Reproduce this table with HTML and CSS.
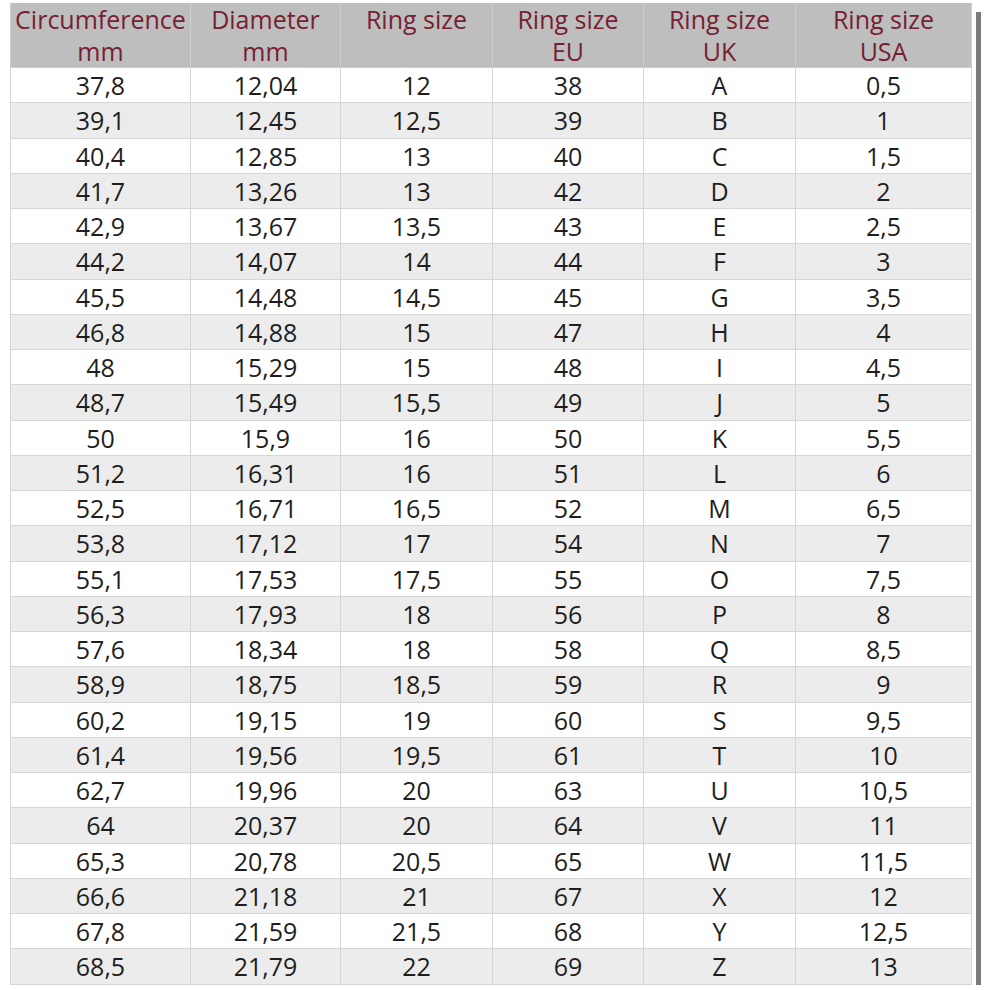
FILE: index.html
```html
<!DOCTYPE html>
<html>
<head>
<meta charset="utf-8">
<link rel="stylesheet" href="styles.css">
</head>
<body>
<div class="wrap">
<table class="sizes">
<colgroup>
<col class="c1"><col class="c2"><col class="c3"><col class="c4"><col class="c5"><col class="c6">
</colgroup>
<thead>
<tr><th>Circumference<br>mm</th><th>Diameter<br>mm</th><th>Ring size</th><th>Ring size<br>EU</th><th>Ring size<br>UK</th><th>Ring size<br>USA</th></tr>
</thead>
<tbody>
<tr><td>37,8</td><td>12,04</td><td>12</td><td>38</td><td>A</td><td>0,5</td></tr>
<tr><td>39,1</td><td>12,45</td><td>12,5</td><td>39</td><td>B</td><td>1</td></tr>
<tr><td>40,4</td><td>12,85</td><td>13</td><td>40</td><td>C</td><td>1,5</td></tr>
<tr><td>41,7</td><td>13,26</td><td>13</td><td>42</td><td>D</td><td>2</td></tr>
<tr><td>42,9</td><td>13,67</td><td>13,5</td><td>43</td><td>E</td><td>2,5</td></tr>
<tr><td>44,2</td><td>14,07</td><td>14</td><td>44</td><td>F</td><td>3</td></tr>
<tr><td>45,5</td><td>14,48</td><td>14,5</td><td>45</td><td>G</td><td>3,5</td></tr>
<tr><td>46,8</td><td>14,88</td><td>15</td><td>47</td><td>H</td><td>4</td></tr>
<tr><td>48</td><td>15,29</td><td>15</td><td>48</td><td>I</td><td>4,5</td></tr>
<tr><td>48,7</td><td>15,49</td><td>15,5</td><td>49</td><td>J</td><td>5</td></tr>
<tr><td>50</td><td>15,9</td><td>16</td><td>50</td><td>K</td><td>5,5</td></tr>
<tr><td>51,2</td><td>16,31</td><td>16</td><td>51</td><td>L</td><td>6</td></tr>
<tr><td>52,5</td><td>16,71</td><td>16,5</td><td>52</td><td>M</td><td>6,5</td></tr>
<tr><td>53,8</td><td>17,12</td><td>17</td><td>54</td><td>N</td><td>7</td></tr>
<tr><td>55,1</td><td>17,53</td><td>17,5</td><td>55</td><td>O</td><td>7,5</td></tr>
<tr><td>56,3</td><td>17,93</td><td>18</td><td>56</td><td>P</td><td>8</td></tr>
<tr><td>57,6</td><td>18,34</td><td>18</td><td>58</td><td>Q</td><td>8,5</td></tr>
<tr><td>58,9</td><td>18,75</td><td>18,5</td><td>59</td><td>R</td><td>9</td></tr>
<tr><td>60,2</td><td>19,15</td><td>19</td><td>60</td><td>S</td><td>9,5</td></tr>
<tr><td>61,4</td><td>19,56</td><td>19,5</td><td>61</td><td>T</td><td>10</td></tr>
<tr><td>62,7</td><td>19,96</td><td>20</td><td>63</td><td>U</td><td>10,5</td></tr>
<tr><td>64</td><td>20,37</td><td>20</td><td>64</td><td>V</td><td>11</td></tr>
<tr><td>65,3</td><td>20,78</td><td>20,5</td><td>65</td><td>W</td><td>11,5</td></tr>
<tr><td>66,6</td><td>21,18</td><td>21</td><td>67</td><td>X</td><td>12</td></tr>
<tr><td>67,8</td><td>21,59</td><td>21,5</td><td>68</td><td>Y</td><td>12,5</td></tr>
<tr><td>68,5</td><td>21,79</td><td>22</td><td>69</td><td>Z</td><td>13</td></tr>
</tbody>
</table>
<div class="shadow"></div>
</div>
</body>
</html>
```
FILE: styles.css
```css
html, body {
  margin: 0;
  padding: 0;
  background: #ffffff;
}
body {
  padding: 3px 0 0 10px;
  font-family: "Open Sans", "Liberation Sans", sans-serif;
}
.wrap {
  display: flex;
  align-items: flex-start;
}
.sizes {
  border-collapse: collapse;
  table-layout: fixed;
  width: 961px;
}
.c1 { width: 180px; }
.c2 { width: 150px; }
.c3 { width: 152px; }
.c4 { width: 151px; }
.c5 { width: 152px; }
.c6 { width: 176px; }
.sizes th {
  background: #bebebe;
  color: #772032;
  font-weight: 500;
  font-size: 25px;
  line-height: 32px;
  height: 64px;
  padding: 0;
  border: 1px solid #cfcfcf;
  border-top: none;
  text-align: center;
  vertical-align: top;
}
.sizes td {
  height: 34.25px;
  padding: 0;
  font-size: 25px;
  font-weight: 500;
  line-height: 32px;
  color: #1e1e1e;
  text-align: center;
  border: 1px solid #d6d6d6;
}
.sizes tbody tr:nth-child(even) td {
  background: #ececec;
}
.shadow {
  width: 5px;
  height: 973px;
  margin-top: 9px;
  margin-left: 4px;
  background: #7a7a7a;
}
```
